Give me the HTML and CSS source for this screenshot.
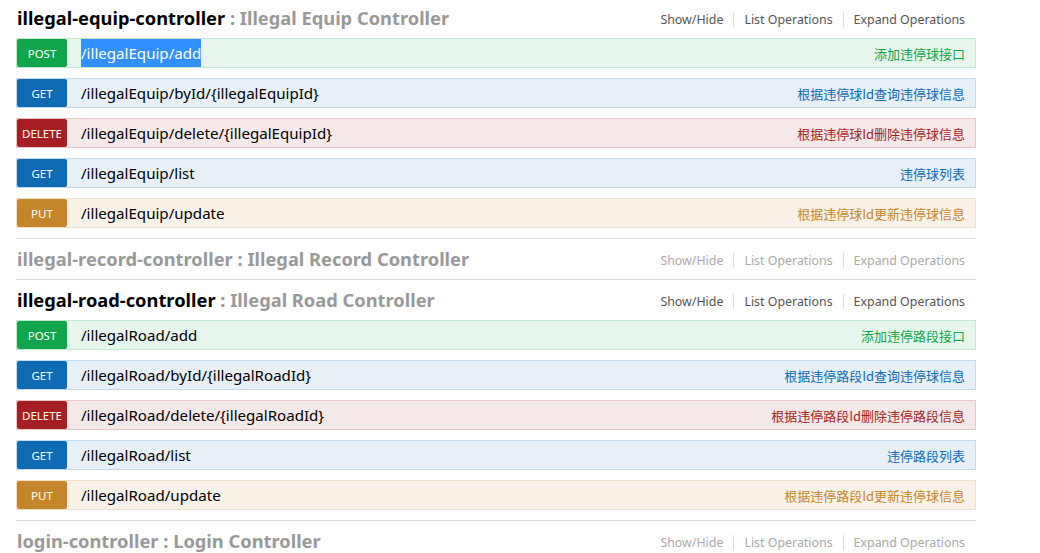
FILE: index.html
```html
<!DOCTYPE html>
<html>
<head>
<meta charset="utf-8">
<link rel="stylesheet" href="styles.css">
</head>
<body>
<ul class="resources">
  <li class="resource open">
    <div class="heading">
      <h2><span class="name">illegal-equip-controller</span> <span class="desc">: Illegal Equip Controller</span></h2>
      <ul class="options"><li>Show/Hide</li><li>List Operations</li><li>Expand Operations</li></ul>
    </div>
    <ul class="ops">
      <li class="op post"><span class="method">post</span><span class="path"><span class="sel">/illegalEquip/add</span></span><span class="summary">添加违停球接口</span></li>
      <li class="op get"><span class="method">get</span><span class="path">/illegalEquip/byId/{illegalEquipId}</span><span class="summary">根据违停球Id查询违停球信息</span></li>
      <li class="op delete"><span class="method">delete</span><span class="path">/illegalEquip/delete/{illegalEquipId}</span><span class="summary">根据违停球Id删除违停球信息</span></li>
      <li class="op get"><span class="method">get</span><span class="path">/illegalEquip/list</span><span class="summary">违停球列表</span></li>
      <li class="op put"><span class="method">put</span><span class="path">/illegalEquip/update</span><span class="summary">根据违停球Id更新违停球信息</span></li>
    </ul>
  </li>
  <li class="resource closed">
    <div class="heading">
      <h2><span class="name">illegal-record-controller</span> <span class="desc">: Illegal Record Controller</span></h2>
      <ul class="options"><li>Show/Hide</li><li>List Operations</li><li>Expand Operations</li></ul>
    </div>
  </li>
  <li class="resource open">
    <div class="heading">
      <h2><span class="name">illegal-road-controller</span> <span class="desc">: Illegal Road Controller</span></h2>
      <ul class="options"><li>Show/Hide</li><li>List Operations</li><li>Expand Operations</li></ul>
    </div>
    <ul class="ops">
      <li class="op post"><span class="method">post</span><span class="path">/illegalRoad/add</span><span class="summary">添加违停路段接口</span></li>
      <li class="op get"><span class="method">get</span><span class="path">/illegalRoad/byId/{illegalRoadId}</span><span class="summary">根据违停路段Id查询违停球信息</span></li>
      <li class="op delete"><span class="method">delete</span><span class="path">/illegalRoad/delete/{illegalRoadId}</span><span class="summary">根据违停路段Id删除违停路段信息</span></li>
      <li class="op get"><span class="method">get</span><span class="path">/illegalRoad/list</span><span class="summary">违停路段列表</span></li>
      <li class="op put"><span class="method">put</span><span class="path">/illegalRoad/update</span><span class="summary">根据违停路段Id更新违停球信息</span></li>
    </ul>
  </li>
  <li class="resource closed">
    <div class="heading">
      <h2><span class="name">login-controller</span> <span class="desc">: Login Controller</span></h2>
      <ul class="options"><li>Show/Hide</li><li>List Operations</li><li>Expand Operations</li></ul>
    </div>
  </li>
</ul>
</body>
</html>
```
FILE: styles.css
```css
html, body {
  margin: 0;
  padding: 0;
  background: #fff;
  overflow: hidden;
}
body {
  font-family: "Noto Sans", "Open Sans", "Noto Sans CJK SC", sans-serif;
}
ul {
  list-style: none;
  margin: 0;
  padding: 0;
}
.resources {
  width: 960px;
  margin: -2px 0 0 16px;
}
.resource {
  border-bottom: 1px solid #ddd;
}
.resource:last-child {
  border-bottom: none;
}
.heading {
  height: 40px;
  display: flex;
  align-items: center;
  justify-content: space-between;
}
.heading h2 {
  margin: 0 0 2px 1px;
  font-size: 18.3px;
  font-weight: bold;
  color: #999;
  white-space: nowrap;
}
.open .heading h2 .name {
  color: #000;
}
.options {
  display: flex;
  align-items: center;
  padding-right: 11px;
  margin-top: 2px;
  font-size: 12.4px;
  color: #555;
}
.closed .options {
  color: #aaa;
}
.options li {
  padding: 0 10px;
  line-height: 15px;
  border-right: 1px solid #ddd;
}
.options li:last-child {
  padding-right: 0;
  border-right: none;
}
.op {
  display: flex;
  align-items: center;
  height: 28px;
  margin-bottom: 10px;
  border: 1px solid;
}
.method {
  width: 50px;
  height: 28px;
  line-height: 30px;
  flex: none;
  text-align: center;
  text-transform: uppercase;
  color: #fff;
  font-size: 11.5px;
  border-radius: 2px;
}
.path {
  flex: 1;
  padding-left: 14px;
  font-size: 15.1px;
  color: #000;
  line-height: 28px;
  white-space: nowrap;
}
.sel {
  display: inline-block;
  background: #3390ff;
  color: #fff;
}
.summary {
  padding-right: 10px;
  font-size: 13px;
  font-family: "Noto Sans CJK SC", "Noto Sans", sans-serif;
  white-space: nowrap;
}
.post { background: #e7f6ec; border-color: #c3e8d1; }
.post .method { background: #10a54a; }
.post .summary { color: #10a54a; }
.get { background: #e7f0f7; border-color: #c3d9ec; }
.get .method { background: #0f6ab4; }
.get .summary { color: #0f6ab4; }
.delete { background: #f5e8e8; border-color: #e8c6c7; }
.delete .method { background: #a41e22; }
.delete .summary { color: #a41e22; }
.put { background: #f9f2e9; border-color: #f0e0ca; }
.put .method { background: #c5862b; }
.put .summary { color: #c5862b; }
```
